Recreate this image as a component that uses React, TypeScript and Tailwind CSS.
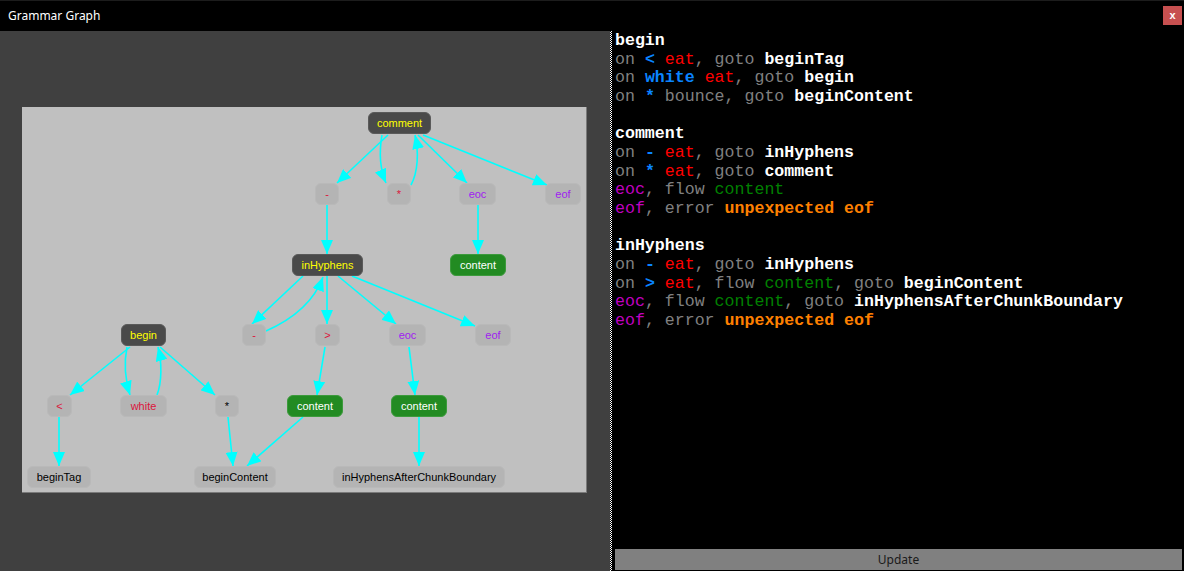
import React from "react";

type Tone = "dark" | "light" | "green";

type GNode = {
  label: string;
  x: number;
  y: number;
  w: number;
  tone: Tone;
  color: string;
};

const nodes: GNode[] = [
  { label: "comment", x: 346, y: 5, w: 63, tone: "dark", color: "text-[#ffff00]" },
  { label: "-", x: 293, y: 76, w: 24, tone: "light", color: "text-[#dc143c]" },
  { label: "*", x: 365, y: 76, w: 24, tone: "light", color: "text-[#dc143c]" },
  { label: "eoc", x: 437, y: 76, w: 37, tone: "light", color: "text-[#a020f0]" },
  { label: "eof", x: 523, y: 76, w: 36, tone: "light", color: "text-[#a020f0]" },
  { label: "inHyphens", x: 270, y: 147, w: 71, tone: "dark", color: "text-[#ffff00]" },
  { label: "content", x: 428, y: 147, w: 56, tone: "green", color: "text-white" },
  { label: "begin", x: 99, y: 217, w: 45, tone: "dark", color: "text-[#ffff00]" },
  { label: "-", x: 220, y: 217, w: 24, tone: "light", color: "text-[#dc143c]" },
  { label: ">", x: 293, y: 217, w: 25, tone: "light", color: "text-[#dc143c]" },
  { label: "eoc", x: 367, y: 217, w: 37, tone: "light", color: "text-[#a020f0]" },
  { label: "eof", x: 453, y: 217, w: 36, tone: "light", color: "text-[#a020f0]" },
  { label: "<", x: 25, y: 288, w: 25, tone: "light", color: "text-[#dc143c]" },
  { label: "white", x: 98, y: 288, w: 47, tone: "light", color: "text-[#dc143c]" },
  { label: "*", x: 193, y: 288, w: 24, tone: "light", color: "text-black" },
  { label: "content", x: 265, y: 288, w: 56, tone: "green", color: "text-white" },
  { label: "content", x: 369, y: 288, w: 56, tone: "green", color: "text-white" },
  { label: "beginTag", x: 5, y: 359, w: 64, tone: "light", color: "text-black" },
  { label: "beginContent", x: 172, y: 359, w: 82, tone: "light", color: "text-black" },
  { label: "inHyphensAfterChunkBoundary", x: 311, y: 359, w: 172, tone: "light", color: "text-black" },
];

const toneClass: Record<Tone, string> = {
  dark: "bg-[#4a4a4a] border-[#5a5a5a]",
  light: "bg-[#b4b4b4] border-[#b9b9b9]",
  green: "bg-[#228b22] border-[#3c9a3c]",
};

// edges in canvas coordinates
const edges: string[] = [
  "M366,28 L315,76",
  "M360,28 C357,45 358,62 364,76",
  "M389,78 C396,65 397,45 393,28",
  "M396,28 L445,76",
  "M401,28 L525,78",
  "M305,98 L305,147",
  "M456,98 L456,147",
  "M281,169 L230,217",
  "M244,224 C262,216 290,200 301,170",
  "M305,169 L305,217",
  "M316,169 L374,217",
  "M330,169 L453,219",
  "M108,240 L48,288",
  "M105,240 C102,255 103,272 108,288",
  "M135,288 C140,275 140,255 136,240",
  "M138,240 L193,288",
  "M37,310 L37,359",
  "M206,310 L211,359",
  "M281,310 L225,359",
  "M303,240 L295,288",
  "M387,240 L393,288",
  "M397,310 L397,359",
];

type Seg = [string, string];

const G = "text-[#808080]";
const R = "text-[#ff0000]";
const B = "text-[#0a84ff] font-bold";
const W = "text-white font-bold";
const GR = "text-[#008000]";
const P = "text-[#c000c0]";
const O = "text-[#ff8000] font-bold";

const lines: Seg[][] = [
  [["begin", W]],
  [["on ", G], ["<", B], [" ", G], ["eat", R], [", goto ", G], ["beginTag", W]],
  [["on ", G], ["white", B], [" ", G], ["eat", R], [", goto ", G], ["begin", W]],
  [["on ", G], ["*", B], [" bounce, goto ", G], ["beginContent", W]],
  [],
  [["comment", W]],
  [["on ", G], ["-", B], [" ", G], ["eat", R], [", goto ", G], ["inHyphens", W]],
  [["on ", G], ["*", B], [" ", G], ["eat", R], [", goto ", G], ["comment", W]],
  [["eoc", P], [", flow ", G], ["content", GR]],
  [["eof", P], [", error ", G], ["unpexpected eof", O]],
  [],
  [["inHyphens", W]],
  [["on ", G], ["-", B], [" ", G], ["eat", R], [", goto ", G], ["inHyphens", W]],
  [["on ", G], [">", B], [" ", G], ["eat", R], [", flow ", G], ["content", GR], [", goto ", G], ["beginContent", W]],
  [["eoc", P], [", flow ", G], ["content", GR], [", goto ", G], ["inHyphensAfterChunkBoundary", W]],
  [["eof", P], [", error ", G], ["unpexpected eof", O]],
];

function GraphCanvas() {
  return (
    <div className="relative w-[565px] h-[386px] bg-[#c0c0c0] border-r border-b border-[#7a7a7a]">
      <svg className="absolute inset-0" width={565} height={386}>
        <defs>
          <marker
            id="arrow"
            markerWidth="15"
            markerHeight="12"
            refX="14"
            refY="6"
            orient="auto"
            markerUnits="userSpaceOnUse"
          >
            <path d="M0,0 L14,6 L0,12 z" fill="#00ffff" />
          </marker>
        </defs>
        {edges.map((d, i) => (
          <path key={i} d={d} fill="none" stroke="#00ffff" strokeWidth={1.6} markerEnd="url(#arrow)" />
        ))}
      </svg>
      {nodes.map((n, i) => (
        <div
          key={i}
          className={`absolute h-[22px] rounded-[6px] border flex items-center justify-center text-[11px] leading-none font-['Liberation_Sans',Arial,sans-serif] ${toneClass[n.tone]} ${n.color}`}
          style={{ left: n.x, top: n.y, width: n.w }}
        >
          {n.label}
        </div>
      ))}
    </div>
  );
}

export default function App() {
  return (
    <div className="w-[1184px] h-[571px] flex flex-col bg-black overflow-hidden">
      <div className="h-[31px] shrink-0 bg-black border-t border-[#1c1c1c] flex items-center justify-between pl-[8px] pr-[2px]">
        <span className="text-white text-[12px] font-['Noto_Sans',sans-serif] -mt-[1px]">Grammar Graph</span>
        <button className="w-[19px] h-[19px] bg-[#c75050] text-white text-[11px] font-bold leading-none flex items-center justify-center font-['Liberation_Sans',Arial,sans-serif] -mt-[1px]">
          x
        </button>
      </div>

      <div className="flex-1 flex min-h-0">
        <div className="w-[610px] shrink-0 bg-[#404040] pl-[22px] pt-[76px]">
          <GraphCanvas />
        </div>

        <div className="w-[3px] shrink-0 flex">
          <div className="w-[2px] bg-[repeating-conic-gradient(#ffffff_0_25%,#000000_0_50%)] bg-[length:2px_2px]" />
          <div className="w-[1px] bg-black" />
        </div>

        <div className="flex-1 flex flex-col bg-black min-w-0">
          <div className="flex-1 pl-[2px] pt-[1px] font-['Liberation_Mono','Courier_New',monospace] text-[16.6px] leading-[18.67px] whitespace-pre">
            {lines.map((segs, i) => (
              <div key={i} className="h-[18.67px]">
                {segs.map(([t, c], j) => (
                  <span key={j} className={c}>
                    {t}
                  </span>
                ))}
              </div>
            ))}
          </div>
          <button className="h-[21px] mx-[2px] mb-[1px] bg-[#808080] text-[#1a1a1a] text-[12px] font-['Noto_Sans',sans-serif] flex items-center justify-center pt-[1px]">
            Update
          </button>
        </div>
      </div>
    </div>
  );
}
